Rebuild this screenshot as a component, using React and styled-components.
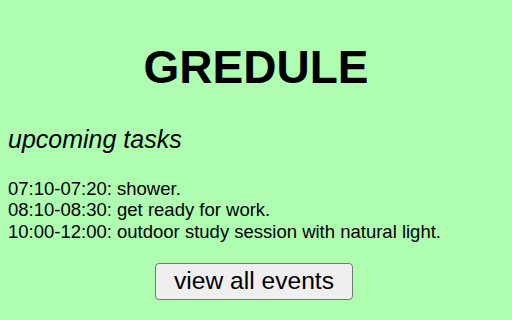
import React from 'react';
import styled, { createGlobalStyle } from 'styled-components';

const GlobalStyle = createGlobalStyle`
  html, body {
    margin: 0;
    padding: 0;
    background: #aefdb0;
  }
  body {
    font-family: "Liberation Sans", Arial, sans-serif;
    color: #000;
  }
`;

const Page = styled.div`
  width: 512px;
  height: 320px;
  box-sizing: border-box;
  padding: 0 8px;
  display: flex;
  flex-direction: column;
  overflow: hidden;
`;

const Title = styled.h1`
  margin: 40px 0 0 0;
  font-size: 46px;
  font-weight: 700;
  text-align: center;
  line-height: 54px;
`;

const Subtitle = styled.h2`
  margin: 31px 0 0 0;
  font-size: 25px;
  font-weight: 400;
  font-style: italic;
  line-height: 28px;
`;

const TaskList = styled.div`
  margin-top: 25px;
  display: flex;
  flex-direction: column;
`;

const Task = styled.div`
  font-size: 18.5px;
  line-height: 21.3px;
  white-space: nowrap;
`;

const ButtonRow = styled.div`
  display: flex;
  justify-content: center;
  margin-top: 21px;
`;

const Button = styled.button`
  height: 37px;
  box-sizing: border-box;
  padding: 0 18px;
  font-family: "Liberation Sans", Arial, sans-serif;
  font-size: 24.6px;
  color: #000;
  background: #efefef;
  border: 1px solid #767676;
  border-radius: 4px;
  margin-right: 4px;
`;

const tasks = [
  '07:10-07:20: shower.',
  '08:10-08:30: get ready for work.',
  '10:00-12:00: outdoor study session with natural light.',
];

const App = () => {
  return (
    <Page>
      <GlobalStyle />
      <Title>GREDULE</Title>
      <Subtitle>upcoming tasks</Subtitle>
      <TaskList>
        {tasks.map((t) => (
          <Task key={t}>{t}</Task>
        ))}
      </TaskList>
      <ButtonRow>
        <Button>view all events</Button>
      </ButtonRow>
    </Page>
  );
};

export default App;
